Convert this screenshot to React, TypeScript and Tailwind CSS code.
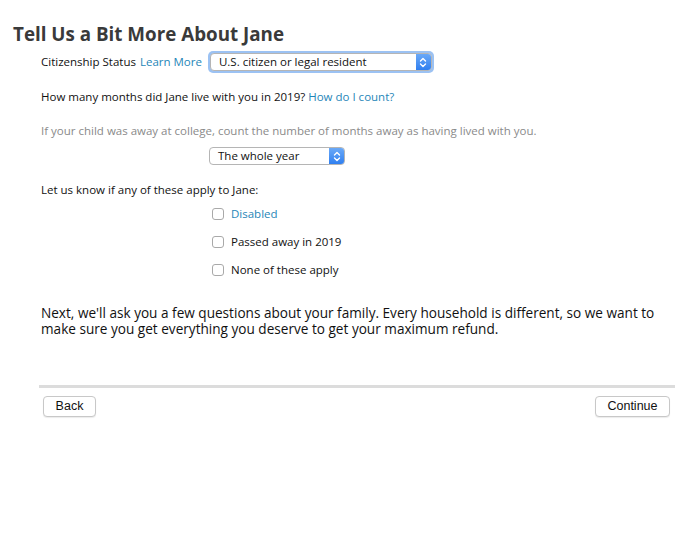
import React from "react";

const Arrows = () => (
  <svg width="8" height="11" viewBox="0 0 8 11" fill="none" stroke="white" strokeWidth="1.4" strokeLinecap="round" strokeLinejoin="round">
    <path d="M1.5 4 L4 1.5 L6.5 4" />
    <path d="M1.5 7 L4 9.5 L6.5 7" />
  </svg>
);

function Select({ label, width, focused }: { label: string; width: string; focused?: boolean }) {
  return (
    <div className={`${focused ? "rounded-[5px] p-[2px] bg-[#9cc2f3]" : ""}`}>
      <div className={`flex h-[18px] ${width} rounded-[4px] border border-[#b5b5b5] bg-white overflow-hidden`}>
        <div className="flex-1 pl-[8px] text-[11.5px] leading-[16px] text-[#111]">{label}</div>
        <div className="w-[15px] flex items-center justify-center bg-gradient-to-b from-[#6aa9f7] to-[#2f7ff0]">
          <Arrows />
        </div>
      </div>
    </div>
  );
}

function Check({ label, blue }: { label: string; blue?: boolean }) {
  return (
    <div className="flex items-center h-[14px]">
      <div className="w-[12px] h-[12px] rounded-[3px] border border-[#a9a9a9] bg-white" />
      <span className={`ml-[7px] text-[11.5px] ${blue ? "text-[#1f86b8]" : "text-[#111]"}`}>{label}</span>
    </div>
  );
}

export default function App() {
  return (
    <div className="w-[680px] h-[538px] bg-white" style={{ fontFamily: '"Open Sans", sans-serif' }}>
      <div className="pt-[22px] pl-[13px]">
        <h1 className="text-[18.8px] leading-[24px] font-bold text-[#3a3a3a]">Tell Us a Bit More About Jane</h1>
      </div>
      <div className="pl-[41px] mt-[5px] flex items-center h-[22px]">
        <span className="text-[11.5px] text-[#111]">Citizenship Status</span>
        <span className="ml-[4px] text-[11.5px] text-[#1f86b8]">Learn More</span>
        <div className="ml-[6px]">
          <Select label="U.S. citizen or legal resident" width="w-[222px]" focused />
        </div>
      </div>
      <div className="pl-[41px] mt-[17px] text-[11.5px] text-[#111] leading-[14px]">
        How many months did Jane live with you in 2019? <span className="text-[#1f86b8]">How do I count?</span>
      </div>
      <div className="pl-[41px] mt-[20px] text-[11.5px] text-[#8a8a8a] leading-[14px]">
        If your child was away at college, count the number of months away as having lived with you.
      </div>
      <div className="pl-[209px] mt-[9px]">
        <Select label="The whole year" width="w-[136px]" />
      </div>
      <div className="pl-[41px] mt-[18px] text-[11.5px] text-[#111] leading-[14px]">Let us know if any of these apply to Jane:</div>
      <div className="pl-[212px] mt-[10px] flex flex-col gap-[14px]">
        <Check label="Disabled" blue />
        <Check label="Passed away in 2019" />
        <Check label="None of these apply" />
      </div>
      <p className="pl-[41px] pr-[20px] mt-[28px] text-[13.6px] leading-[16px] text-[#111]">
        Next, we'll ask you a few questions about your family. Every household is different, so we want to make sure you get everything you deserve to get your maximum refund.
      </p>
      <div className="ml-[39px] mr-[5px] mt-[48px] h-[3px] bg-[#dcdcdc]" />
      <div className="flex justify-between pl-[43px] pr-[10px] mt-[8px]" style={{ fontFamily: '"Liberation Sans", Arial, sans-serif' }}>
        <button className="h-[21px] w-[53px] rounded-[4px] border border-[#c8c8c8] bg-white text-[12.5px] text-[#111] shadow-[0_1px_1px_rgba(0,0,0,0.08)]">Back</button>
        <button className="h-[21px] w-[75px] rounded-[4px] border border-[#c8c8c8] bg-white text-[12.5px] text-[#111] shadow-[0_1px_1px_rgba(0,0,0,0.08)]">Continue</button>
      </div>
    </div>
  );
}
